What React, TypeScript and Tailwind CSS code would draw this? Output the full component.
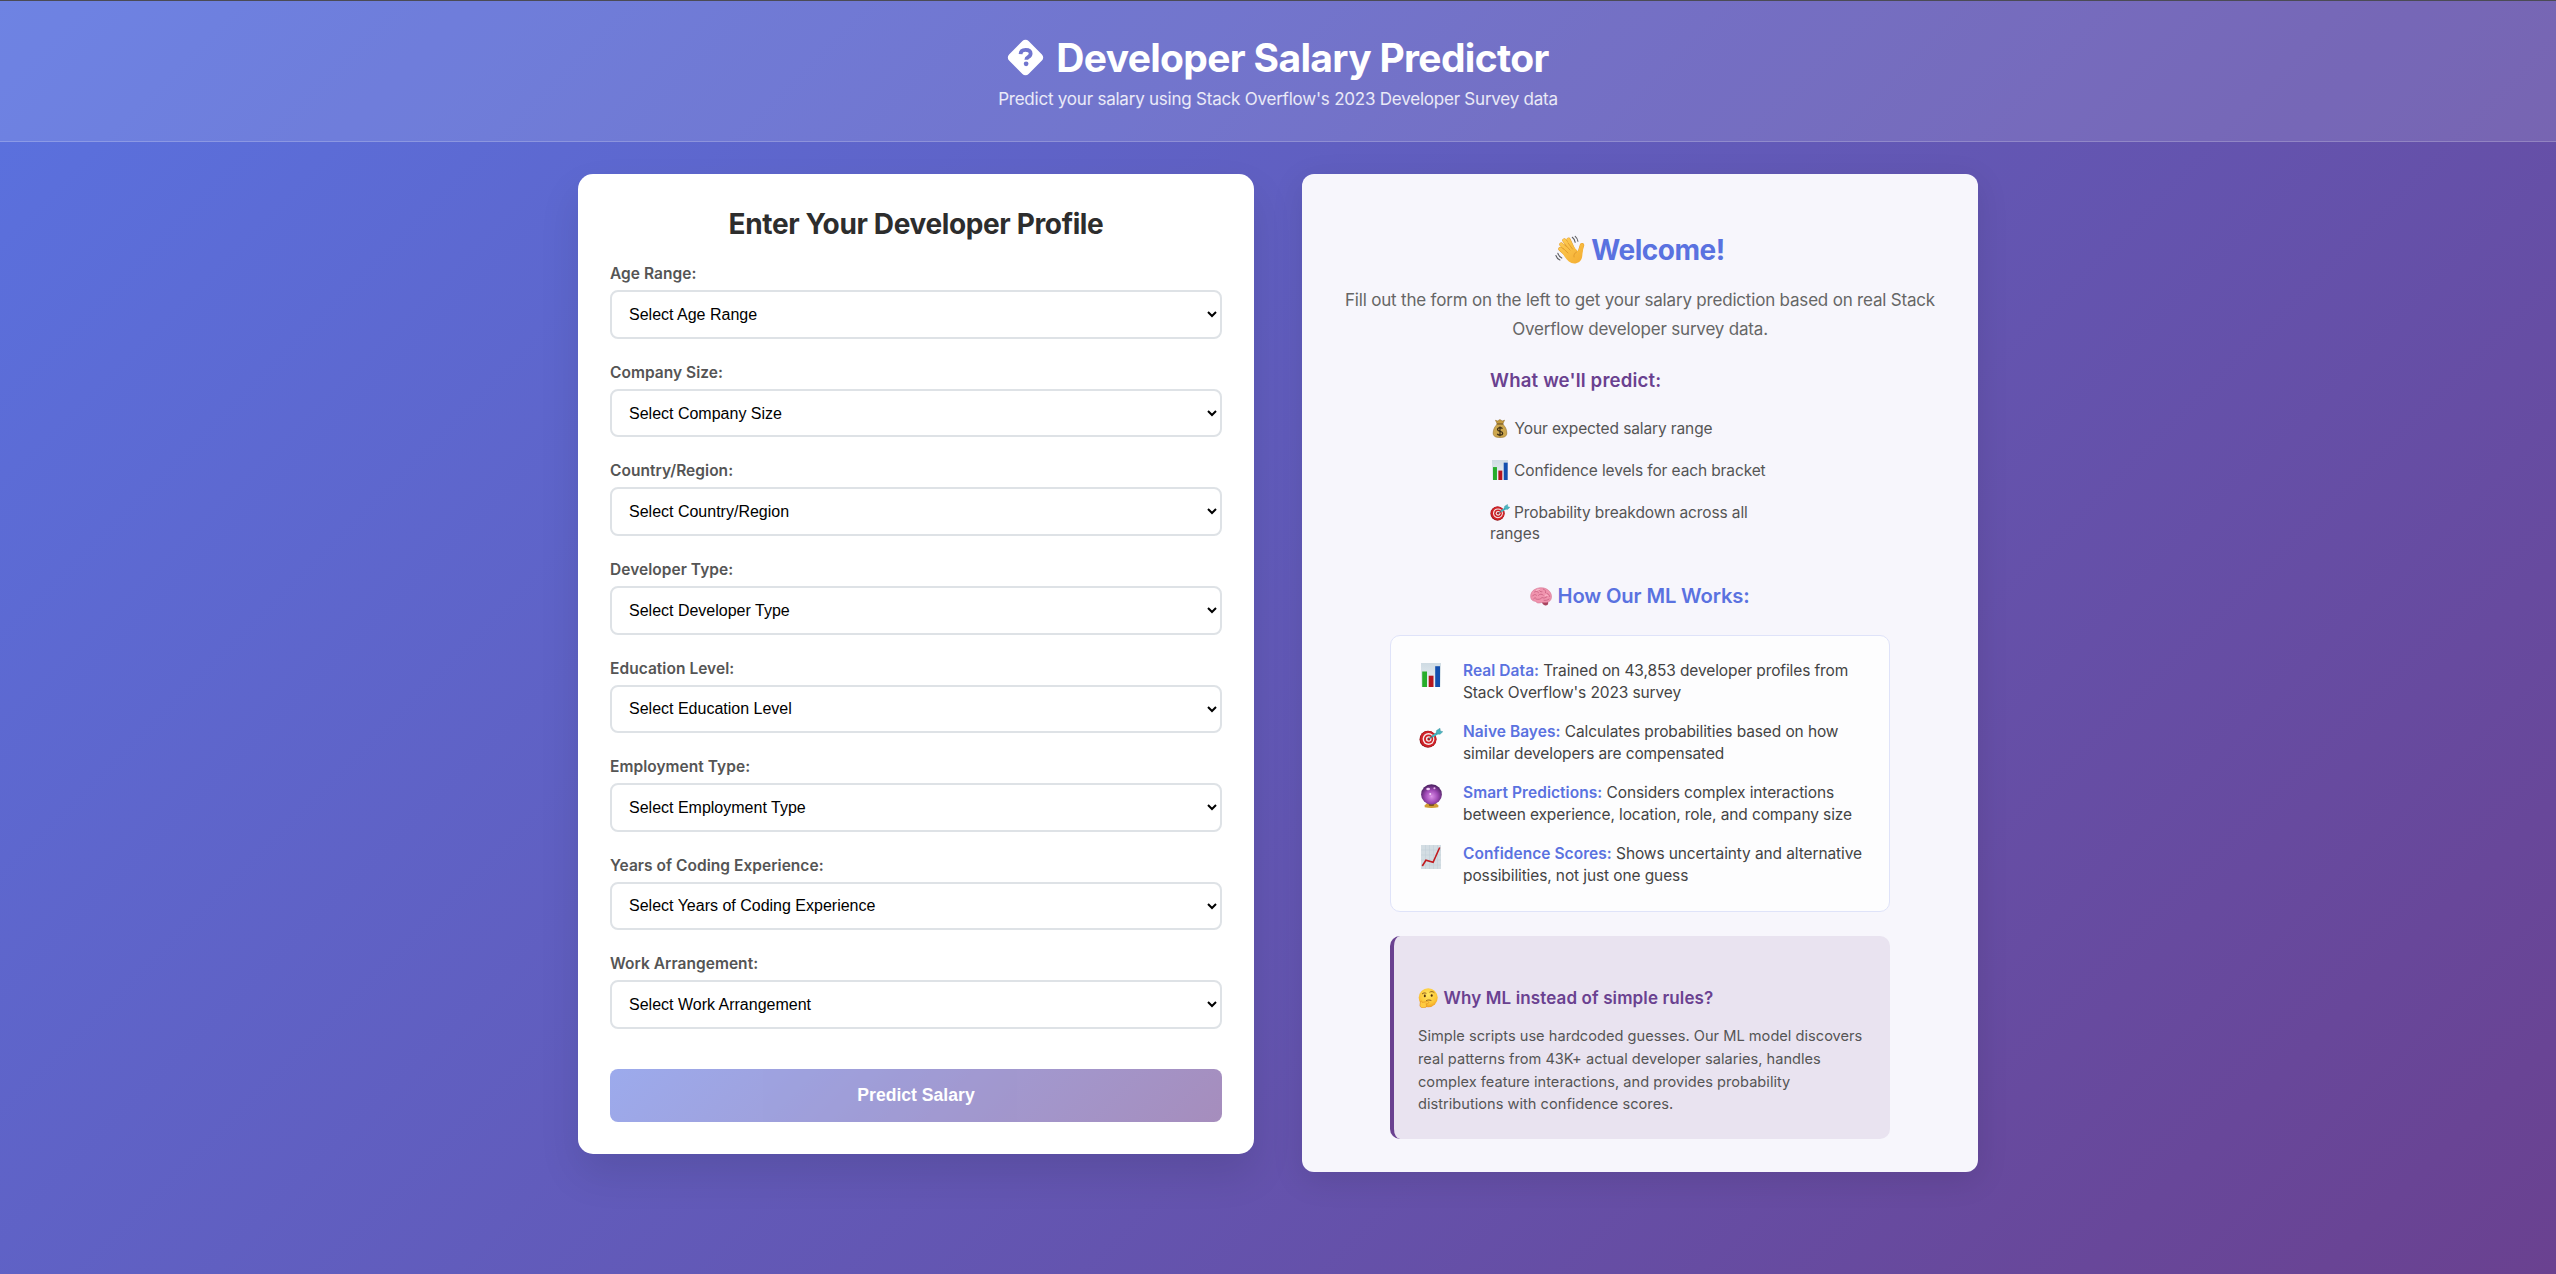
import type { ReactNode } from "react";

type IconProps = { className?: string };

function Diamond() {
  return (
    <svg viewBox="0 0 36 36" className="h-[37px] w-[37px]">
      <rect x="4.6" y="4.600" width="26.800" height="26.800" rx="4.200" transform="rotate(45 18 18)" fill="#fff" />
      <path d="M13.200 14.700c.1-2.900 2.200-4.200 4.900-4.200 2.900 0 4.900 1.300 4.900 3.700 0 1.800-1 2.700-2.400 3.500-1.200.7-1.800 1.200-1.800 2.400" fill="none" stroke="#7075cf" strokeWidth="3.700" />
      <circle cx="18.600" cy="24.200" r="2.300" fill="#7075cf" />
    </svg>
  );
}

function Wave({ className }: IconProps) {
  return (
    <svg viewBox="0 0 30 30" className={className}>
      <defs>
        <linearGradient id="hand" x1="0" y1="0" x2="30" y2="30" gradientUnits="userSpaceOnUse">
          <stop offset="0" stopColor="#ffd25a" />
          <stop offset="1" stopColor="#f3aa2e" />
        </linearGradient>
      </defs>
      <g stroke="#e29b2c" strokeWidth="4.100" strokeLinecap="round" fill="none">
        <path d="M14 17 6.300 9.400M16 15 9.300 5.400M18 14 13.600 4.600M12 20 5.300 13.900" />
        <path d="M24 20 27 10.200" strokeWidth="4.400" />
      </g>
      <path d="M7 17c2 4 5 9 9.500 11 4.500 1.600 9.500-.8 10.500-5.500.6-3 .4-5 1.300-9l-5.500 2.500-6.500-6.500-7 4Z" fill="url(#hand)" />
      <g stroke="url(#hand)" strokeWidth="3.300" strokeLinecap="round" fill="none">
        <path d="M14 17 6.300 9.400M16 15 9.300 5.400M18 14 13.600 4.600M12 20 5.300 13.900" />
        <path d="M24 20 27 10.200" strokeWidth="3.600" />
      </g>
      <g stroke="#d98f27" strokeWidth=".7" fill="none" strokeLinecap="round">
        <path d="M8 13.200 13 18M9.800 9.300 15 15M13.300 8.300 17.500 14M21.500 17c-2 1-3 3-2.500 5" />
      </g>
      <g stroke="#5d5e62" strokeWidth="1.100" fill="none" strokeLinecap="round">
        <path d="M17.300 2.300c1.600 1.200 2.500 2.800 2.900 5M20.200 1.300c1.700 1.400 2.500 3 2.700 5" />
        <path d="M2.800 18.200c.7 2.300 2 3.800 4 4.900M.9 20.500c.7 2.200 2 3.600 4 4.500" />
      </g>
    </svg>
  );
}

function MoneyBag({ className }: IconProps) {
  return (
    <svg viewBox="0 0 16 19" preserveAspectRatio="none" className={className}>
      <path d="M5.200 4.700 3.400 1.300l2.300.6L7.900.5l2.300 1.400 2.400-.7-1.800 3.500Z" fill="#c49a3e" stroke="#8a6420" strokeWidth=".5" />
      <path d="M5.300 5.200C2.800 7.500 1.200 10.300 1.200 14c0 3.300 2.300 4.500 6.800 4.500s6.800-1.200 6.800-4.500c0-3.700-1.600-6.500-4.100-8.800Z" fill="#cda74e" stroke="#9a7429" strokeWidth=".6" />
      <path d="M4.800 5h6.400" stroke="#7b5a1f" strokeWidth="1.100" strokeLinecap="round" />
      <path d="M10.500 9.700C9.900 9 9.100 8.700 8 8.700c-1.500 0-2.500.7-2.500 1.800 0 2.600 5.200 1.200 5.200 3.700 0 1.200-1.200 1.900-2.700 1.900-1.300 0-2.200-.5-2.800-1.300M8 7.500v9.700" fill="none" stroke="#3a2c14" strokeWidth="1.200" />
    </svg>
  );
}

function BarChart({ className }: IconProps) {
  return (
    <svg viewBox="0 0 20 24" preserveAspectRatio="none" className={className}>
      <defs>
        <linearGradient id="paper" x1="0" y1="0" x2="0" y2="1">
          <stop offset="0" stopColor="#cfdbe3" />
          <stop offset="1" stopColor="#eef3f6" />
        </linearGradient>
      </defs>
      <rect width="20" height="24" fill="url(#paper)" />
      <rect x="1.200" y="8.500" width="4.800" height="15.500" fill="#27ad2b" />
      <rect x="7.700" y="12.700" width="4.800" height="11.300" fill="#b5161f" />
      <rect x="14.200" y="3.200" width="4.800" height="20.800" fill="#134fae" />
    </svg>
  );
}

function LineChart({ className }: IconProps) {
  return (
    <svg viewBox="0 0 20 24" preserveAspectRatio="none" className={className}>
      <rect width="20" height="24" fill="#d3dde3" />
      <path d="M4.500 0v24M8.500 0v24M12.500 0v24M16.500 0v24M0 5h20M0 10h20M0 15h20M0 20h20" stroke="#c3d0d8" strokeWidth=".6" />
      <path d="m1.300 21 3.600-5.700 7.200 2 6.600-14.800" fill="none" stroke="#c11c20" strokeWidth="1.600" />
    </svg>
  );
}

function Target({ className }: IconProps) {
  return (
    <svg viewBox="0 0 24 20" className={className}>
      <circle cx="9" cy="11.300" r="8.500" fill="#8f1116" />
      <circle cx="9.300" cy="11" r="8.100" fill="#cf2228" />
      <circle cx="9.500" cy="11" r="5.900" fill="#f6eeee" />
      <circle cx="9.600" cy="11" r="4.600" fill="#cf2228" />
      <circle cx="9.700" cy="11" r="2.800" fill="#f6eeee" />
      <circle cx="9.800" cy="11" r="1.500" fill="#b5161d" />
      <path d="M10 10.800 18.500 5" stroke="#3a7d86" strokeWidth="1.100" />
      <path d="m13.500 8.500 5-3.400" stroke="#3fb6c2" strokeWidth="2.200" />
      <path d="m17 5.900.6-3.500L21 .3l.3 2.700 2.500.7-2.800 2.600Z" fill="#49b5c1" stroke="#2f8792" strokeWidth=".4" />
    </svg>
  );
}

function CrystalBall({ className }: IconProps) {
  return (
    <svg viewBox="0 0 20 24" preserveAspectRatio="none" className={className}>
      <defs>
        <radialGradient id="ball" cx=".5" cy=".6" r=".55">
          <stop offset="0" stopColor="#dc92e8" />
          <stop offset=".55" stopColor="#a04ab6" />
          <stop offset="1" stopColor="#542569" />
        </radialGradient>
      </defs>
      <path d="M3.500 21.500 6 18.800h8l2.500 2.700v1.700c-4 .9-9 .9-13 0Z" fill="#d19d33" />
      <path d="M7 19.500h6l-1 2.500H8Z" fill="#7c551a" />
      <ellipse cx="10" cy="10.400" rx="9.900" ry="10.200" fill="url(#ball)" />
      <ellipse cx="6.800" cy="5" rx="1.800" ry="1.300" fill="#f2d3f7" />
      <circle cx="12.800" cy="4.300" r="1" fill="#e6b4ee" />
      <circle cx="8.800" cy="10" r=".9" fill="#f4d9f8" />
    </svg>
  );
}

function Brain({ className }: IconProps) {
  return (
    <svg viewBox="0 0 22 19" className={className}>
      <path d="M11.500 14.500c.7 2.400 2 3.700 3.800 4 1.500.2 2.700-.6 2.900-2.200l-.3-2.800Z" fill="#a8445f" />
      <path d="M.7 10.300C.3 6.800 2 3.500 5.200 2.200 8.300.4 13 .1 16.200 1.800c3.400 1.600 5.500 4.700 5.300 8.300-.1 3-2 5-5 5.300-2.200.3-4.500-.3-6.300.5-2 .5-3.700-.1-4.400-1.500C3 14.300.9 12.800.7 10.300Z" fill="#f094ae" stroke="#cf6b8a" strokeWidth=".5" />
      <g fill="none" stroke="#c65f80" strokeWidth=".8" strokeLinecap="round">
        <path d="M2.500 9c1-1.600 2.600-1.800 4-.8M4.500 5c1.500-.9 3-.7 4 .6M9 2.500c.2 1.600 1.400 2.500 3 2.300M13.500 2.200c1.700.5 2.500 1.800 2.100 3.500M8.500 8.300c1.400-1.500 3.300-1.500 4.700-.2M6 12c2.400.8 4.600.3 6-1.500 1.600.9 3.500.6 5-.8M17 6.500c1.500.3 2.500 1.400 2.700 3M14 13.300c1.600.3 3.600 0 5-1.200M3.500 12c.4-.8 1.200-1.300 2-1.200" />
      </g>
      <path d="M6.500 3.300c1-.6 2-.8 3-.7M15.500 8.200c.8-.3 1.500-.2 2 .2" stroke="#ffd0dc" strokeWidth=".8" fill="none" strokeLinecap="round" />
    </svg>
  );
}

function Thinking({ className }: IconProps) {
  return (
    <svg viewBox="0 0 20 20" className={className}>
      <defs>
        <radialGradient id="face" cx=".5" cy=".35" r=".65">
          <stop offset="0" stopColor="#ffe662" />
          <stop offset=".7" stopColor="#fdc737" />
          <stop offset="1" stopColor="#f0a028" />
        </radialGradient>
      </defs>
      <circle cx="10.200" cy="9.700" r="9.500" fill="url(#face)" />
      <path d="M4.300 5.800c1-1 2.400-1.200 3.700-.6M11.800 4.100c1.400-.9 3.200-.7 4.300.4" stroke="#86561a" strokeWidth=".9" fill="none" strokeLinecap="round" />
      <ellipse cx="6.800" cy="7.900" rx="1" ry="1.300" fill="#553210" />
      <ellipse cx="13.700" cy="7.500" rx="1" ry="1.300" fill="#553210" />
      <path d="M8.500 12.500c1.500-.7 3-.7 4.500-.1" stroke="#86561a" strokeWidth=".9" fill="none" strokeLinecap="round" />
      <path d="M2.400 13.600c.9-.9 1.900-.3 1.900.8l5.200-.9c1.600-.1 1.700 1.700.3 2l-2 .4c1.400.7 1.200 3.200-.6 3.700-2.400.7-5 .2-5.300-2.100Z" fill="#ffcb40" stroke="#dc8a20" strokeWidth=".6" />
    </svg>
  );
}

const fields = [
  "Age Range",
  "Company Size",
  "Country/Region",
  "Developer Type",
  "Education Level",
  "Employment Type",
  "Years of Coding Experience",
  "Work Arrangement",
];

function Field({ name }: { name: string }) {
  return (
    <div>
      <label className="mb-[7px] block text-[15.5px] leading-[19px] font-semibold tracking-[0.04px] text-[#555]">{name}:</label>
      <select className="block h-[48.57px] w-full rounded-lg border-2 border-[#dee2e6] bg-white pl-[13px] font-['Liberation_Sans',sans-serif] text-[16px] text-black">
        <option>Select {name}</option>
      </select>
    </div>
  );
}

function Step({ icon, title, first, second }: { icon: ReactNode; title: string; first: string; second: string }) {
  return (
    <li className="flex h-[45px] gap-4">
      <span className="flex w-8 shrink-0 justify-center">{icon}</span>
      <p className="text-[15.5px] leading-[22.5px] tracking-[-0.11px] whitespace-nowrap text-[#444]">
        <strong className="font-semibold tracking-[0.05px] text-[#5a72e0]">{title}:</strong> {first}
        <br />
        {second}
      </p>
    </li>
  );
}

export default function App() {
  return (
    <div className="min-h-[1274px] bg-[linear-gradient(135deg,#5a72e0_0%,#6a4190_100%)] font-[Inter,sans-serif]">
      <header className="h-[142px] border-t border-b border-t-[#4b4b55] border-b-white/20 bg-white/12 pt-8 text-center text-white">
        <h1 className="flex h-12 items-center justify-center gap-[12px] text-[39px] font-bold tracking-[-0.67px]">
          <Diamond />
          <span className="pt-[2px] leading-[48px]">Developer Salary Predictor</span>
        </h1>
        <p className="mt-1 text-[17px] leading-7 tracking-[-0.22px] text-white/85">
          Predict your salary using Stack Overflow's 2023 Developer Survey data
        </p>
      </header>

      <main className="mx-auto grid w-[1400px] grid-cols-2 items-start gap-12 pt-8">
        <section className="rounded-[15px] bg-white px-8 pt-[33px] pb-8 shadow-[0_20px_40px_rgba(0,0,0,0.1)]">
          <h2 className="mb-[22.3px] text-center text-[28px] leading-[35px] font-bold tracking-[-0.36px] text-[#2d2d2d]">
            Enter Your Developer Profile
          </h2>
          <div className="flex flex-col gap-6">
            {fields.map((name) => (
              <Field key={name} name={name} />
            ))}
          </div>
          <button className="mt-10 block h-[53px] w-full rounded-lg bg-[linear-gradient(135deg,#5a72e0,#6a4190)] font-['Liberation_Sans',sans-serif] text-[17.6px] font-bold text-white opacity-60">
            Predict Salary
          </button>
        </section>

        <section className="flex h-[998px] flex-col items-center rounded-[12px] bg-[#f7f6fc] pt-[59px] shadow-[0_8px_32px_rgba(0,0,0,0.1)]">
          <h2 className="flex items-center gap-[6px] text-[28px] leading-[34px] font-bold tracking-[-0.5px] text-[#5a72e0]">
            <Wave className="size-[30px]" />
            Welcome!
          </h2>
          <p className="mt-[19.3px] text-center text-[17px] leading-[29px] tracking-[-0.19px] whitespace-nowrap text-[#666]">
            Fill out the form on the left to get your salary prediction based on real Stack
            <br />
            Overflow developer survey data.
          </p>

          <div className="mt-[23.5px] w-[300px]">
            <h3 className="text-[18.6px] leading-6 font-semibold tracking-[0.17px] text-[#6a4190]">What we'll predict:</h3>
            <ul className="mt-[26.4px] flex flex-col gap-[20.8px] text-[15.5px] leading-[21px] tracking-[-0.12px] text-[#555]">
              <li className="flex items-center">
                <MoneyBag className="mr-[7px] ml-[1.5px] h-[19px] w-[16px]" />
                Your expected salary range
              </li>
              <li className="flex items-center">
                <BarChart className="mr-[6px] ml-[1.5px] h-[20px] w-[16.5px]" />
                Confidence levels for each bracket
              </li>
              <li>
                <div className="flex items-center">
                  <Target className="mr-[4px] h-[17px] w-[20px]" />
                  Probability breakdown across all
                </div>
                ranges
              </li>
            </ul>
          </div>

          <h3 className="mt-[39.7px] flex items-center gap-[5px] text-[20.2px] leading-[26px] font-semibold tracking-[-0.14px] text-[#5a72e0]">
            <Brain className="h-[19px] w-[22px]" />
            How Our ML Works:
          </h3>

          <ul className="mt-[25.500px] flex w-[500px] flex-col gap-4 rounded-[10px] border border-[#dfe3f9] bg-[#fdfdfe] px-6 py-[23.7px]">
            <Step
              icon={<BarChart className="mt-[3px] h-6 w-5" />}
              title="Real Data"
              first="Trained on 43,853 developer profiles from"
              second="Stack Overflow's 2023 survey"
            />
            <Step
              icon={<Target className="mt-[7px] h-5 w-6" />}
              title="Naive Bayes"
              first="Calculates probabilities based on how"
              second="similar developers are compensated"
            />
            <Step
              icon={<CrystalBall className="mt-[2px] h-6 w-[21px]" />}
              title="Smart Predictions"
              first="Considers complex interactions"
              second="between experience, location, role, and company size"
            />
            <Step
              icon={<LineChart className="mt-[2px] h-6 w-5" />}
              title="Confidence Scores"
              first="Shows uncertainty and alternative"
              second="possibilities, not just one guess"
            />
          </ul>

          <div className="mt-6 h-[202.7px] w-[500px] rounded-[10px] border-l-4 border-[#6a4190] bg-[#e9e3f0] pt-[51px] pl-6">
            <h4 className="flex items-center gap-[5.5px] text-[17px] leading-[22px] font-semibold tracking-[0.12px] text-[#6a4190]">
              <Thinking className="size-5" />
              Why ML instead of simple rules?
            </h4>
            <p className="mt-[15.6px] text-[14.6px] leading-[22.8px] tracking-[0.02px] whitespace-nowrap text-[#555]">
              Simple scripts use hardcoded guesses. Our ML model discovers
              <br />
              real patterns from 43K+ actual developer salaries, handles
              <br />
              complex feature interactions, and provides probability
              <br />
              distributions with confidence scores.
            </p>
          </div>
        </section>
      </main>
    </div>
  );
}
